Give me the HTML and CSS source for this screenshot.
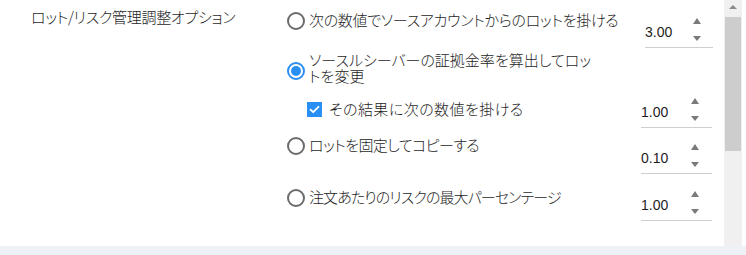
FILE: index.html
```html
<!DOCTYPE html>
<html lang="ja">
<head>
<meta charset="utf-8">
<link rel="stylesheet" href="styles.css">
</head>
<body>
<div class="page">
  <div class="main">
    <div class="label">ロット/リスク管理調整オプション</div>
    <div class="options">
      <div class="row row1">
        <span class="radio r1"></span>
        <span class="text t1">次の数値でソースアカウントからのロットを掛ける</span>
        <div class="spin spin-a s1"><span class="value">3.00</span><span class="arrows"><i class="up"></i><i class="down"></i></span></div>
      </div>
      <div class="row row2">
        <span class="radio checked r2"></span>
        <span class="text t2"><span class="ln">ソースルシーバーの証拠金率を算出してロッ</span><span class="ln">トを変更</span></span>
      </div>
      <div class="row row3">
        <span></span>
        <span class="check-line t3"><span class="checkbox"><svg width="15" height="15" viewBox="0 0 15 15"><path d="M3.5 7.6 L6.2 10.2 L11.5 4.8" fill="none" stroke="#fff" stroke-width="1.8" stroke-linecap="round" stroke-linejoin="round"/></svg></span><span>その結果に次の数値を掛ける</span></span>
        <div class="spin s3"><span class="value">1.00</span><span class="arrows"><i class="up"></i><i class="down"></i></span></div>
      </div>
      <div class="row row4">
        <span class="radio r4"></span>
        <span class="text t4">ロットを固定してコピーする</span>
        <div class="spin s4"><span class="value">0.10</span><span class="arrows"><i class="up"></i><i class="down"></i></span></div>
      </div>
      <div class="row row5">
        <span class="radio r5"></span>
        <span class="text t5">注文あたりのリスクの最大パーセンテージ</span>
        <div class="spin s5"><span class="value">1.00</span><span class="arrows"><i class="up"></i><i class="down"></i></span></div>
      </div>
    </div>
    <div class="scrollbar">
      <div class="sb-up"><i></i></div>
      <div class="sb-thumb"></div>
    </div>
  </div>
  <div class="footer"></div>
</div>
</body>
</html>
```

FILE: styles.css
```css
html, body {
  margin: 0;
  padding: 0;
  background: #ffffff;
}
body {
  width: 746px;
  height: 255px;
  overflow: hidden;
  font-family: "Noto Sans CJK JP", "Noto Sans", sans-serif;
  font-size: 15px;
  font-weight: 300;
  color: #1e1e1e;
  font-feature-settings: "palt";
}
.page {
  display: flex;
  flex-direction: column;
  height: 255px;
}
.main {
  display: flex;
  height: 246px;
}
.label {
  width: 253px;
  padding-left: 31px;
  padding-top: 7px;
  line-height: 20px;
  white-space: nowrap;
  letter-spacing: -0.3px;
}
.options {
  width: 425px;
  padding-left: 3px;
  padding-right: 12px;
  display: flex;
  flex-direction: column;
}
.row {
  display: grid;
  grid-template-columns: 18px 1fr 71px;
  column-gap: 4px;
  align-items: start;
}
.row1 { height: 39px; padding-top: 11px; }
.row2 { height: 36px; padding-top: 2px; }
.row3 { height: 38px; padding-top: 4px; }
.row4 { height: 44px; padding-top: 6px; }
.row5 { height: 61px; padding-top: 5px; }

.text {
  line-height: 18px;
  white-space: nowrap;
}
.t1 { letter-spacing: -0.3px; }
.t2 { display: flex; flex-direction: column; }
.t2 .ln { display: block; height: 16px; line-height: 16px; }
.t4 { letter-spacing: -0.6px; }
.t5 { margin-top: 3px; letter-spacing: -0.9px; }

.radio {
  width: 14px;
  height: 14px;
  border: 2px solid #6b6b6b;
  border-radius: 50%;
  position: relative;
}
.r1 { margin-top: 1px; }
.r2 { margin-top: 10px; }
.r4 { margin-top: 1px; }
.r5 { margin-top: 4px; }
.radio.checked {
  border-color: #2a8ff2;
}
.radio.checked::after {
  content: "";
  position: absolute;
  left: 2px;
  top: 2px;
  width: 10px;
  height: 10px;
  border-radius: 50%;
  background: #2a8ff2;
}

.check-line {
  display: flex;
  align-items: center;
  gap: 7px;
  margin-left: -2px;
  margin-top: 8px;
  line-height: 18px;
  white-space: nowrap;
  letter-spacing: 0.45px;
}
.checkbox {
  width: 15px;
  height: 15px;
  background: #2a8ff2;
  display: block;
}
.checkbox svg { display: block; }

.spin {
  height: 35px;
  border-bottom: 1px solid #cfcfcf;
  display: flex;
  font-family: "Liberation Sans", "Noto Sans", sans-serif;
  font-size: 14px;
  font-weight: 400;
}
.spin-a {
  width: 68px;
  justify-self: end;
  margin-right: -1px;
}
.s1 { margin-top: 1px; }
.s4 { margin-top: 2px; }
.value {
  flex: 1;
  padding-top: 11px;
  line-height: 18px;
  color: #1e1e1e;
}
.arrows {
  width: 8px;
  margin-right: 13px;
  display: flex;
  flex-direction: column;
}
.spin-a .arrows { margin-right: 12px; }
.arrows .up {
  display: block;
  margin-top: 6px;
  width: 0;
  height: 0;
  border-left: 4px solid transparent;
  border-right: 4px solid transparent;
  border-bottom: 6px solid #7a7a7a;
}
.arrows .down {
  display: block;
  margin-top: 12px;
  width: 0;
  height: 0;
  border-left: 4px solid transparent;
  border-right: 4px solid transparent;
  border-top: 5px solid #7a7a7a;
}

.scrollbar {
  width: 18px;
  margin-right: 4px;
  background: #f0f0f0;
  display: flex;
  flex-direction: column;
  align-items: center;
}
.sb-up {
  height: 17px;
  display: flex;
  justify-content: center;
  padding-top: 5px;
  box-sizing: border-box;
}
.sb-up i {
  display: block;
  width: 0;
  height: 0;
  border-left: 4px solid transparent;
  border-right: 4px solid transparent;
  border-bottom: 4px solid #8a8a8a;
}
.sb-thumb {
  width: 16px;
  height: 134px;
  background: #cdcdcd;
}
.footer {
  height: 9px;
  background: #eef2f6;
}
```
